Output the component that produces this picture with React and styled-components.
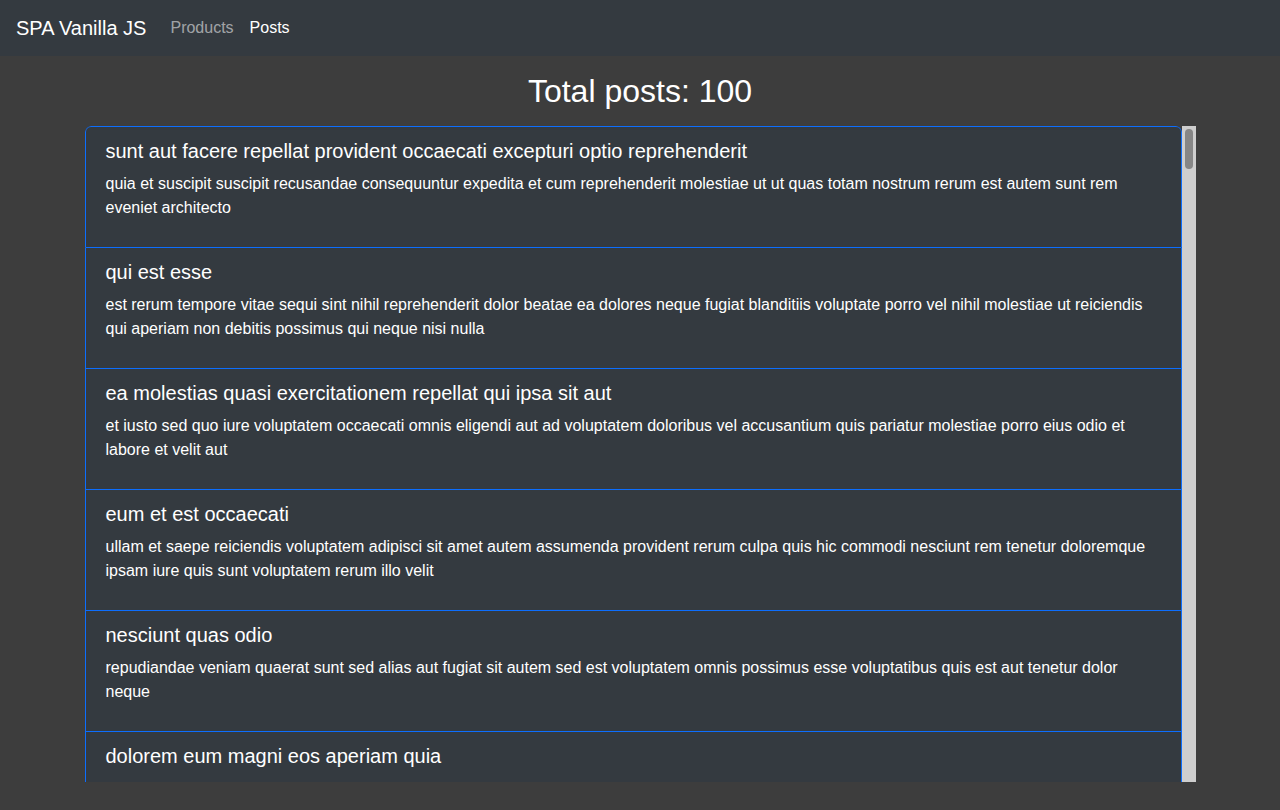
import styled, { createGlobalStyle } from "styled-components";

const GlobalStyle = createGlobalStyle`
  html, body {
    margin: 0;
    padding: 0;
  }
  body {
    background: #3d3d3d;
    font-family: "Liberation Sans", Arial, sans-serif;
    color: #fff;
    height: 810px;
    overflow: hidden;
  }
`;

const basePosts = [
  {
    title: "sunt aut facere repellat provident occaecati excepturi optio reprehenderit",
    body: "quia et suscipit suscipit recusandae consequuntur expedita et cum reprehenderit molestiae ut ut quas totam nostrum rerum est autem sunt rem eveniet architecto",
  },
  {
    title: "qui est esse",
    body: "est rerum tempore vitae sequi sint nihil reprehenderit dolor beatae ea dolores neque fugiat blanditiis voluptate porro vel nihil molestiae ut reiciendis qui aperiam non debitis possimus qui neque nisi nulla",
  },
  {
    title: "ea molestias quasi exercitationem repellat qui ipsa sit aut",
    body: "et iusto sed quo iure voluptatem occaecati omnis eligendi aut ad voluptatem doloribus vel accusantium quis pariatur molestiae porro eius odio et labore et velit aut",
  },
  {
    title: "eum et est occaecati",
    body: "ullam et saepe reiciendis voluptatem adipisci sit amet autem assumenda provident rerum culpa quis hic commodi nesciunt rem tenetur doloremque ipsam iure quis sunt voluptatem rerum illo velit",
  },
  {
    title: "nesciunt quas odio",
    body: "repudiandae veniam quaerat sunt sed alias aut fugiat sit autem sed est voluptatem omnis possimus esse voluptatibus quis est aut tenetur dolor neque",
  },
  {
    title: "dolorem eum magni eos aperiam quia",
    body: "ut aspernatur corporis harum nihil quis provident sequi mollitia nobis aliquid molestiae perspiciatis et ea nemo ab reprehenderit accusantium quas voluptate dolores velit et doloremque molestiae",
  },
  {
    title: "magnam facilis autem",
    body: "dolore placeat quibusdam ea quo vitae magni quis enim qui quis quo nemo aut saepe quidem repellat excepturi ut quia sunt ut sequi eos ea sed quas",
  },
  {
    title: "dolorem dolore est ipsam",
    body: "dignissimos aperiam dolorem qui eum facilis quibusdam animi sint suscipit qui sint possimus cum quaerat magni maiores excepturi ipsam ut commodi dolor voluptatum modi aut vitae",
  },
  {
    title: "nesciunt iure omnis dolorem tempora et accusantium",
    body: "consectetur animi nesciunt iure dolore enim quia ad veniam autem ut quam aut nobis et est aut quod aut provident voluptas autem voluptas",
  },
  {
    title: "optio molestias id quia eum",
    body: "quo et expedita modi cum officia vel magni doloribus qui repudiandae vero nisi sit quos veniam quod sed accusamus veritatis error",
  },
];

// fill the rest of the 100 posts by mixing the words of the real ones
const words = basePosts.map((p) => p.body).join(" ").split(" ");
let seed = 7;
const rand = () => {
  seed = (seed * 9301 + 49297) % 233280;
  return seed / 233280;
};
const phrase = (n) =>
  Array.from({ length: n }, () => words[Math.floor(rand() * words.length)]).join(" ");

const posts = [
  ...basePosts,
  ...Array.from({ length: 90 }, () => ({
    title: phrase(3 + Math.floor(rand() * 6)),
    body: phrase(20 + Math.floor(rand() * 12)),
  })),
];

export default function App() {
  return (
    <>
      <GlobalStyle />
      <Navbar>
        <Brand href="#">SPA Vanilla JS</Brand>
        <NavLinks>
          <NavLink href="#">Products</NavLink>
          <NavLink href="#" $active>
            Posts
          </NavLink>
        </NavLinks>
      </Navbar>
      <Main>
        <Title>Total posts: {posts.length}</Title>
        <ScrollBox>
          <Viewport>
            <ListGroup>
              {posts.map((post, i) => (
                <Item key={i}>
                  <ItemTitle>{post.title}</ItemTitle>
                  <ItemBody>{post.body}</ItemBody>
                </Item>
              ))}
            </ListGroup>
          </Viewport>
          <Track>
            <Thumb />
          </Track>
        </ScrollBox>
      </Main>
    </>
  );
}

const Navbar = styled.nav`
  display: flex;
  align-items: center;
  height: 56px;
  box-sizing: border-box;
  padding: 8px 16px;
  background: #343a40;
`;

const Brand = styled.a`
  font-size: 20px;
  line-height: 30px;
  color: #fff;
  text-decoration: none;
  margin-right: 16px;
`;

const NavLinks = styled.div`
  display: flex;
`;

const NavLink = styled.a`
  font-size: 16px;
  line-height: 24px;
  padding: 8px;
  text-decoration: none;
  color: ${(p) => (p.$active ? "#fff" : "rgba(255, 255, 255, 0.55)")};
`;

const Main = styled.main`
  display: flex;
  flex-direction: column;
  align-items: center;
  padding-top: 16px;
`;

const Title = styled.h2`
  margin: 0 0 16px;
  font-size: 32px;
  font-weight: 400;
  line-height: 38px;
  text-align: center;
`;

const ScrollBox = styled.div`
  display: flex;
  width: 1111px;
  height: 656px;
`;

const Viewport = styled.div`
  flex: 1;
  min-width: 0;
  overflow-y: scroll;
  scrollbar-width: none;

  &::-webkit-scrollbar {
    display: none;
  }
`;

const Track = styled.div`
  flex: 0 0 14px;
  background: #cecece;
  padding: 3px 3px 0;
  box-sizing: border-box;
`;

const Thumb = styled.div`
  height: 40px;
  border-radius: 4px;
  background: #868686;
`;

const ListGroup = styled.ul`
  list-style: none;
  margin: 0;
  padding: 0;
  border-radius: 6px 6px 0 0;
  overflow: hidden;
`;

const Item = styled.li`
  background: #343a40;
  border: 1px solid #0d6efd;
  border-top-width: 0;
  padding: 12px 20px;

  &:first-child {
    border-top-width: 1px;
    border-radius: 6px 6px 0 0;
  }
`;

const ItemTitle = styled.h5`
  margin: 0 0 9px;
  font-size: 20px;
  font-weight: 400;
  line-height: 24px;
`;

const ItemBody = styled.p`
  margin: 0 0 15px;
  font-size: 16px;
  line-height: 24px;
`;
